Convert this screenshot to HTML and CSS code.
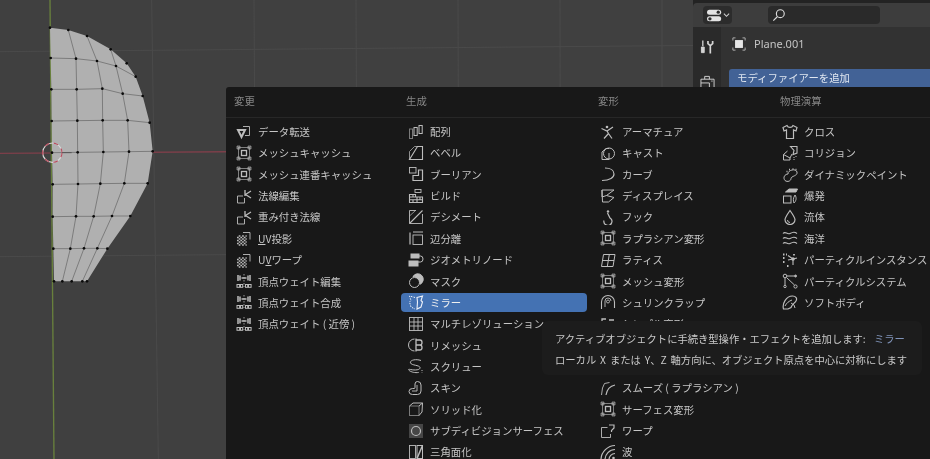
FILE: index.html
```html
<!DOCTYPE html>
<html lang="ja">
<head>
<meta charset="utf-8">
<title>Blender modifier menu</title>
<link rel="stylesheet" href="styles.css">
</head>
<body>
<svg class="sprite" aria-hidden="true">
  <symbol id="i-transfer" viewBox="0 0 16 16"><path d="M2 6h7L5.500 13z" stroke-width="2"/><path d="M7 2.500h6.500v9H9" stroke-width=".9"/></symbol>
  <symbol id="i-mesh" viewBox="0 0 16 16"><rect x="2.500" y="2.500" width="11" height="11" opacity=".7" stroke-width=".9"/><rect x="5.500" y="5.500" width="5" height="5" stroke-width="1.300"/><path d="M1 1h3v3H1zM12 1h3v3h-3zM1 12h3v3H1zM12 12h3v3h-3z" fill="currentColor" fill-opacity=".35" stroke-width=".6"/></symbol>
  <symbol id="i-normal" viewBox="0 0 16 16"><path d="M7 8H1.500v7h7V10" stroke-width=".9"/><path d="M9 2v6M9.500 6.500L15 3M9.500 6.500L15 10" stroke-width="1.300"/></symbol>
  <symbol id="i-uv" viewBox="0 0 16 16"><path d="M7 2.500h7v7" stroke-width=".9"/><path d="M1 7.500h9M1 10.500h9M1 13.500h9" stroke-width="1.700" stroke-dasharray="1.700 1.700"/><path d="M2.700 6h8M2.700 9h8M2.700 12h8M2.700 15h8" stroke-width="1.700" stroke-dasharray="1.700 1.700"/></symbol>
  <symbol id="i-weight" viewBox="0 0 16 16"><path d="M2 2v6M14 2v6M4 2.500v5M12 2.500v5" stroke-width="1.500"/><path d="M5.500 5h5" stroke-width="1.500"/><path d="M8 1v13" stroke-width=".8" stroke-dasharray="1.500 1.500"/><rect x="1" y="11.500" width="2.600" height="2.800"/><rect x="4.500" y="11.500" width="2.200" height="2.800"/><rect x="9.500" y="11.500" width="2.200" height="2.800"/><rect x="12.500" y="11.500" width="2.600" height="2.800"/></symbol>
  <symbol id="i-array" viewBox="0 0 16 16"><rect x="1.500" y="5" width="3" height="9.500" opacity=".6"/><rect x="6" y="3.500" width="3.200" height="8"/><rect x="11" y="1.500" width="3.200" height="8"/></symbol>
  <symbol id="i-bevel" viewBox="0 0 16 16"><path d="M9.500 1.500h5v13h-13z" stroke-width="1.100"/><path d="M1.500 14.500V6.500l5-5h3" stroke-width=".9" opacity=".8"/></symbol>
  <symbol id="i-boolean" viewBox="0 0 16 16"><rect x="1.500" y="1.500" width="6.500" height="5.500" stroke-width=".9"/><path d="M10.500 4h4v10.500H5V9.500h5.500z" stroke-width="1.200"/></symbol>
  <symbol id="i-build" viewBox="0 0 16 16"><rect x="7" y="1.500" width="6" height="3" stroke-width=".9"/><path d="M1.500 6.500h6v2.500h7v5.500h-13zM1.500 9h13M1.500 11.700h13M5 6.500v2.500M9 9v5.500M5 11.700v2.800M12 9v2.700" stroke-width="1.100"/></symbol>
  <symbol id="i-decimate" viewBox="0 0 16 16"><path d="M8 1.500H1.500v13h13V5" stroke-width=".9"/><path d="M1.500 14.500L14.500 1.500" stroke-width="1.100"/><path d="M1.500 7l6-5.500" stroke-width=".7"/></symbol>
  <symbol id="i-edgesplit" viewBox="0 0 16 16"><path d="M2 2.500v12" stroke-width="1.200"/><path d="M5 2h10" stroke-width="1"/><rect x="5" y="5" width="9.500" height="9.500" stroke-width=".9"/></symbol>
  <symbol id="i-geo" viewBox="0 0 16 16"><rect x="3" y="2" width="8" height="4" fill="currentColor"/><rect x="1" y="9" width="9" height="5" fill="currentColor"/><path d="M11 4h1.500q2.500 0 2.500 3t-2.500 3H10"/></symbol>
  <symbol id="i-mask" viewBox="0 0 16 16"><circle cx="6.500" cy="9.500" r="5"/><path d="M5 3.500a5.500 5.500 0 1 1 7 7.800c1-3.500-3-8-7-7.800z" fill="currentColor"/></symbol>
  <symbol id="i-mirror" viewBox="0 0 16 16"><path d="M7 3.500L1.500 2l1.500 4.500L1.500 8 3 13l4 2" stroke-dasharray="1.500 1.200"/><path d="M9 3.500L14.500 2 13 6.500 14.500 8 13 13l-4 2 .5-7z" stroke-width="1.100"/></symbol>
  <symbol id="i-multires" viewBox="0 0 16 16"><rect x="1.500" y="1.500" width="13" height="13" stroke-width=".9"/><path d="M1.500 10h13M1.500 6h13M10 1.500v13M6 1.500v13" stroke-width=".9"/></symbol>
  <symbol id="i-remesh" viewBox="0 0 16 16"><path d="M6.500 2a6 6 0 0 0 0 12"/><path d="M8 1.500v13M8 3h4q2 0 2 2.500T12 8q2 0 2 2.500T12 13H8M8 8h6" stroke-width="1.300"/></symbol>
  <symbol id="i-screw" viewBox="0 0 16 16"><path d="M13 2.500C7 .5 1.500 2.500 2.500 5s9 2 9.500 4.500-5 3-9.500 2S2 14 6.500 14.500 11 14 11 14"/><path d="M14 12v2.500" stroke-dasharray="1 1"/></symbol>
  <symbol id="i-skin" viewBox="0 0 16 16"><path d="M9.500 1.500q3.500 0 3.500 3.500v6q0 3.500-3.500 3.500h-5q-3.500 0-3.500-3t3.500-3h1.500q1 0 1-1V4q0-2.500 2.500-2.500z"/><path d="M4 11h5V5" stroke-width=".9"/></symbol>
  <symbol id="i-solid" viewBox="0 0 16 16"><rect x="1.500" y="5" width="9.500" height="9.500" opacity=".6"/><path d="M1.500 5L5 2h9.500l-.5 9-3 3.500M11 5l3.500-3"/></symbol>
  <symbol id="i-subsurf" viewBox="0 0 16 16"><rect x="1" y="1" width="14" height="14" fill="currentColor" fill-opacity=".28" stroke="none"/><circle cx="8" cy="8" r="4.500" stroke-width="1.200"/></symbol>
  <symbol id="i-tri" viewBox="0 0 16 16"><rect x="1.500" y="1.500" width="6" height="13" stroke-width=".9"/><rect x="9" y="1.500" width="5.500" height="13"/><path d="M9 14.500l5.500-13" stroke-width="1.500"/></symbol>
  <symbol id="i-armature" viewBox="0 0 16 16"><circle cx="7" cy="3" r="1.300" fill="currentColor" stroke="none"/><path d="M1.500 4.500L7 7l6-4M7 7l1.500 2.500M8.500 9.500L4 14.500M8.500 9.500l3.500 5" stroke-width="1.200"/></symbol>
  <symbol id="i-cast" viewBox="0 0 16 16"><circle cx="9" cy="8.500" r="5.500"/><path d="M2 14.500V7L6 3.500h3M2 14.500h7V8" stroke-width="1"/></symbol>
  <symbol id="i-curve" viewBox="0 0 16 16"><path d="M5 2c5.500 0 9 2.500 9 6s-4 6.500-12 6.500" stroke-width="1.200"/></symbol>
  <symbol id="i-displace" viewBox="0 0 16 16"><path d="M2 2h12L6.500 7.500 14 9.500 8.500 14H2.500z M2 2v7l4.500-1.500"/></symbol>
  <symbol id="i-hook" viewBox="0 0 16 16"><circle cx="8" cy="2.500" r="1.200" fill="currentColor" stroke="none"/><path d="M7.500 4l2.500 5a4 4 0 1 1-6 2.500" stroke-width="1.200"/></symbol>
  <symbol id="i-lattice" viewBox="0 0 16 16"><path d="M3.500 2.500h11.500l-2 12H1.500zM9.300 2.500l-2 12M2.500 8.500h11.500"/></symbol>
  <symbol id="i-shrink" viewBox="0 0 16 16"><path d="M1.500 15V8a6.500 6.500 0 0 1 13 0v6" stroke-width="1.100"/><path d="M5 13V7a3 3 0 0 1 6 0" stroke-width=".9"/><circle cx="8" cy="7.500" r="1.500" stroke-width=".9"/></symbol>
  <symbol id="i-simple" viewBox="0 0 16 16"><path d="M2 15V3h4M9 4h5" stroke-width="1.300"/></symbol>
  <symbol id="i-smooth" viewBox="0 0 16 16"><path d="M1.500 15l1-7 2-4.500 5-1" stroke-width=".9"/><path d="M6 15C7 9 10 6 15 5" stroke-width="1.200"/></symbol>
  <symbol id="i-warp" viewBox="0 0 16 16"><path d="M7.500 4.500h-6v10h9V11" stroke-width=".9"/><path d="M9 2h5v3l-2.500 2.500V9" stroke-width="1.200"/></symbol>
  <symbol id="i-wave" viewBox="0 0 16 16"><path d="M1 15.500C1 8 8 1.500 15 1.500M5 15.500c0-5 4.500-10 10-10M9 15.500c0-3 2.500-6 6-6" stroke-width="1.200"/><circle cx="13.500" cy="14" r="1.300" fill="currentColor" stroke="none"/></symbol>
  <symbol id="i-cloth" viewBox="0 0 16 16"><path d="M5 1.500L1 3.500 2 7l2.500-1v8.500h7V6L14 7l1-3.500-4-2c-1 2.500-5 2.500-6 0z" stroke-width="1.200"/></symbol>
  <symbol id="i-collision" viewBox="0 0 16 16"><path d="M8.500 1.500H15V8l-4 1.500 1-4z" stroke-width="1.100"/><path d="M5.500 6L1.500 9.500v5.500H8V13l-6.500-3.500M8 13l2-4"/><path d="M12 12v3M14 11v1" stroke-dasharray="1 1"/></symbol>
  <symbol id="i-paint" viewBox="0 0 16 16"><path d="M3 14.500c-2.500-3 0-6.500 3-6.500-.5-4 8-6 9-2s-6 4-6 6.500-3.500 4-6 2z"/><path d="M7 3.500h1M10.500 3h1M13.500 3.500h1M4.500 5.500h1" stroke-width="1.500"/></symbol>
  <symbol id="i-explode" viewBox="0 0 16 16"><path d="M3.500 4L7 1h8.500l-1.500 3z" fill="currentColor"/><rect x="1.500" y="8" width="7.500" height="7"/><path d="M13 7c-2 3-2 6-1 8 2-2 3-5 1-8z"/></symbol>
  <symbol id="i-fluid" viewBox="0 0 16 16"><path d="M8 1.500C4.500 6.500 3 9 3 10.500a5 5 0 0 0 10 0C13 9 11.500 6.500 8 1.500z" stroke-width="1.200"/><path d="M5.500 11a2.500 2.500 0 0 0 2.500 2.500"/></symbol>
  <symbol id="i-ocean" viewBox="0 0 16 16"><path d="M1 3.500c2.500-3 4 1.500 7 0s4.500-2 7 0M1 8.500c2.500-3 4 1.500 7 0s4.500-2 7 0M1 13.500c2.500-3 4 1.500 7 0s4.500-2 7 0" stroke-width="1.100"/></symbol>
  <symbol id="i-pinst" viewBox="0 0 16 16"><path d="M1 2.500h4M1 6h3M1 10h3M5 14h2M12 2v2" stroke-width="1.800" stroke-dasharray="1.500 1.500"/><path d="M6 3.500l5 3.500v6M11 7l4-1M11 7l-5 1" stroke-width="1.100"/><circle cx="11" cy="7" r="1.800" fill="currentColor" stroke="none"/></symbol>
  <symbol id="i-particles" viewBox="0 0 16 16"><circle cx="3" cy="3" r="1.800"/><circle cx="3" cy="13.500" r="1.200"/><circle cx="13.500" cy="13.500" r="1.600"/><circle cx="13.500" cy="3" r="1" fill="currentColor"/><path d="M3 5v7M4.500 4.500L12.500 12M5 3h7"/></symbol>
  <symbol id="i-soft" viewBox="0 0 16 16"><path d="M1.500 15C0 10 4 2 10.500 2c3.500 0 5 2.500 3.500 5s-4 3-5 6.500L6 15z" stroke-width="1.200"/><path d="M3 12c1.500-3 4-5 7-6M9 9l3 2 1 3"/></symbol>
</svg>

<main class="stage">
  <svg class="scene" viewBox="0 0 2790 1377" aria-hidden="true">
    <path class="grid" d="M0 155L2790 130M0 770L2790 745M455 0L475 1377M762 0L770 1377M1068 0L1074 1377M1374 0L1378 1377M1680 0L1682 1377M1986 0L1986 1377"/>
    <path class="axis-x" d="M0 460L2790 440"/>
    <path class="axis-y" d="M150 0L162 1377"/>
    <path class="face" d="M150 83L205 90 261 108 332 148 380 190 407 230 428 288 449 368 458 454 443 550 391 648 322 746 261 844H162L160 746 158 650 158 553 156 458 155 363 154 268 152 174z"/>
    <path class="edge" d="M152 174L228 176 291 183 348 198 407 230M154 268L230 268 307 266 368 281 428 288M155 363L232 362 308 361 383 361 449 368M156 458L233 457 310 456 387 455 458 454M158 553L234 552 301 551 373 550 443 550M158 650L228 649 281 649 336 648 391 648M160 746L211 746 252 745 292 745 322 746M205 90L228 176 230 268 232 362 233 457 234 552 228 649 211 746 187 844M261 108L291 183 307 266 308 361 310 456 301 551 281 649 252 745 215 844M332 148L348 198 368 281 383 361 387 455 373 550 336 648 292 745 247 844"/>
    <g class="verts">
      <circle cx="150" cy="83" r="4"/><circle cx="205" cy="90" r="4"/><circle cx="261" cy="108" r="4"/><circle cx="332" cy="148" r="4"/><circle cx="380" cy="190" r="4"/><circle cx="407" cy="230" r="4"/>
      <circle cx="152" cy="174" r="4"/><circle cx="228" cy="176" r="4"/><circle cx="291" cy="183" r="4"/><circle cx="348" cy="198" r="4"/>
      <circle cx="154" cy="268" r="4"/><circle cx="230" cy="268" r="4"/><circle cx="307" cy="266" r="4"/><circle cx="368" cy="281" r="4"/><circle cx="428" cy="288" r="4"/>
      <circle cx="155" cy="363" r="4"/><circle cx="232" cy="362" r="4"/><circle cx="308" cy="361" r="4"/><circle cx="383" cy="361" r="4"/><circle cx="449" cy="368" r="4"/>
      <circle cx="156" cy="458" r="4"/><circle cx="233" cy="457" r="4"/><circle cx="310" cy="456" r="4"/><circle cx="387" cy="455" r="4"/><circle cx="458" cy="454" r="4"/>
      <circle cx="158" cy="553" r="4"/><circle cx="234" cy="552" r="4"/><circle cx="301" cy="551" r="4"/><circle cx="373" cy="550" r="4"/><circle cx="443" cy="550" r="4"/>
      <circle cx="158" cy="650" r="4"/><circle cx="228" cy="649" r="4"/><circle cx="281" cy="649" r="4"/><circle cx="336" cy="648" r="4"/><circle cx="391" cy="648" r="4"/>
      <circle cx="160" cy="746" r="4"/><circle cx="211" cy="746" r="4"/><circle cx="252" cy="745" r="4"/><circle cx="292" cy="745" r="4"/><circle cx="322" cy="746" r="4"/>
      <circle cx="162" cy="844" r="4"/><circle cx="187" cy="844" r="4"/><circle cx="215" cy="844" r="4"/><circle cx="247" cy="844" r="4"/><circle cx="261" cy="844" r="4"/>
    </g>
    <circle class="origin-a" cx="157" cy="458" r="29"/>
    <circle class="origin-b" cx="157" cy="458" r="29"/>
    <path class="origin-tick" d="M185 458h30"/>
  </svg>

  <aside class="props">
    <header class="props-head">
      <div class="editor-btn">
        <svg class="editor-ic" viewBox="0 0 18 16"><rect x="0" y="1" width="17" height="6" rx="3"/><rect x="0" y="9" width="17" height="6" rx="3"/><circle class="knob" cx="13.500" cy="4" r="2"/><circle class="knob" cx="3.500" cy="12" r="2"/></svg>
        <svg class="chev" viewBox="0 0 8 6"><path d="M1 1.500l3 3 3-3"/></svg>
      </div>
      <div class="search"><svg class="search-ic" viewBox="0 0 16 16"><circle cx="9.500" cy="6.500" r="4.500"/><path d="M6 10l-4.500 4.500"/></svg></div>
    </header>
    <div class="props-main">
      <nav class="tabs">
        <svg class="tab-ic" viewBox="0 0 16 16"><path d="M3 1v6" stroke-width="1.400"/><path d="M1.500 8h3v6h-3z" fill="currentColor"/><path d="M8.500 1.500v3l2.500 2 2.500-2v-3M11 6.500V15" stroke-width="1.800"/></svg>
        <svg class="tab-ic" viewBox="0 0 16 16"><path d="M1 5h14v10H1zM5 5V2h5v3M1 9h9v6M12 7h1.500"/></svg>
      </nav>
      <div class="props-body">
        <div class="obj-row">
          <svg class="obj-ic" viewBox="0 0 16 16"><path d="M1 4V1h3M12 1h3v3M15 12v3h-3M4 15H1v-3"/><rect x="3.500" y="3.500" width="9" height="9"/></svg>
          <span class="obj-name">Plane.001</span>
        </div>
        <div class="add-btn">モディファイアーを追加</div>
      </div>
    </div>
  </aside>

  <section class="menu">
    <div class="col col-1">
      <h3 class="head">変更</h3>
      <ul class="list">
        <li class="item"><svg class="ic"><use href="#i-transfer"/></svg>データ転送</li>
        <li class="item"><svg class="ic"><use href="#i-mesh"/></svg>メッシュキャッシュ</li>
        <li class="item"><svg class="ic"><use href="#i-mesh"/></svg>メッシュ連番キャッシュ</li>
        <li class="item"><svg class="ic"><use href="#i-normal"/></svg>法線編集</li>
        <li class="item"><svg class="ic"><use href="#i-normal"/></svg>重み付き法線</li>
        <li class="item"><svg class="ic"><use href="#i-uv"/></svg><span><u>U</u>V投影</span></li>
        <li class="item"><svg class="ic"><use href="#i-uv"/></svg><span>U<u>V</u>ワープ</span></li>
        <li class="item"><svg class="ic"><use href="#i-weight"/></svg>頂点ウェイト編集</li>
        <li class="item"><svg class="ic"><use href="#i-weight"/></svg>頂点ウェイト合成</li>
        <li class="item"><svg class="ic"><use href="#i-weight"/></svg>頂点ウェイト ( 近傍 )</li>
      </ul>
    </div>
    <div class="col col-2">
      <h3 class="head">生成</h3>
      <ul class="list">
        <li class="item"><svg class="ic"><use href="#i-array"/></svg>配列</li>
        <li class="item"><svg class="ic"><use href="#i-bevel"/></svg>ベベル</li>
        <li class="item"><svg class="ic"><use href="#i-boolean"/></svg>ブーリアン</li>
        <li class="item"><svg class="ic"><use href="#i-build"/></svg>ビルド</li>
        <li class="item"><svg class="ic"><use href="#i-decimate"/></svg>デシメート</li>
        <li class="item"><svg class="ic"><use href="#i-edgesplit"/></svg>辺分離</li>
        <li class="item"><svg class="ic"><use href="#i-geo"/></svg>ジオメトリノード</li>
        <li class="item"><svg class="ic"><use href="#i-mask"/></svg>マスク</li>
        <li class="item active"><svg class="ic"><use href="#i-mirror"/></svg>ミラー</li>
        <li class="item"><svg class="ic"><use href="#i-multires"/></svg>マルチレゾリューション</li>
        <li class="item"><svg class="ic"><use href="#i-remesh"/></svg>リメッシュ</li>
        <li class="item"><svg class="ic"><use href="#i-screw"/></svg>スクリュー</li>
        <li class="item"><svg class="ic"><use href="#i-skin"/></svg>スキン</li>
        <li class="item"><svg class="ic"><use href="#i-solid"/></svg>ソリッド化</li>
        <li class="item"><svg class="ic"><use href="#i-subsurf"/></svg>サブディビジョンサーフェス</li>
        <li class="item"><svg class="ic"><use href="#i-tri"/></svg>三角面化</li>
      </ul>
    </div>
    <div class="col col-3">
      <h3 class="head">変形</h3>
      <ul class="list">
        <li class="item"><svg class="ic"><use href="#i-armature"/></svg>アーマチュア</li>
        <li class="item"><svg class="ic"><use href="#i-cast"/></svg>キャスト</li>
        <li class="item"><svg class="ic"><use href="#i-curve"/></svg>カーブ</li>
        <li class="item"><svg class="ic"><use href="#i-displace"/></svg>ディスプレイス</li>
        <li class="item"><svg class="ic"><use href="#i-hook"/></svg>フック</li>
        <li class="item"><svg class="ic"><use href="#i-mesh"/></svg>ラプラシアン変形</li>
        <li class="item"><svg class="ic"><use href="#i-lattice"/></svg>ラティス</li>
        <li class="item"><svg class="ic"><use href="#i-mesh"/></svg>メッシュ変形</li>
        <li class="item"><svg class="ic"><use href="#i-shrink"/></svg>シュリンクラップ</li>
        <li class="item"><svg class="ic"><use href="#i-simple"/></svg>シンプル変形</li>
        <li class="item covered">スムーズ</li>
        <li class="item covered">スムーズ ( 補正 )</li>
        <li class="item"><svg class="ic"><use href="#i-smooth"/></svg>スムーズ ( ラプラシアン )</li>
        <li class="item"><svg class="ic"><use href="#i-mesh"/></svg>サーフェス変形</li>
        <li class="item"><svg class="ic"><use href="#i-warp"/></svg>ワープ</li>
        <li class="item"><svg class="ic"><use href="#i-wave"/></svg>波</li>
      </ul>
    </div>
    <div class="col col-4">
      <h3 class="head">物理演算</h3>
      <ul class="list">
        <li class="item"><svg class="ic"><use href="#i-cloth"/></svg>クロス</li>
        <li class="item"><svg class="ic"><use href="#i-collision"/></svg>コリジョン</li>
        <li class="item"><svg class="ic"><use href="#i-paint"/></svg>ダイナミックペイント</li>
        <li class="item"><svg class="ic"><use href="#i-explode"/></svg>爆発</li>
        <li class="item"><svg class="ic"><use href="#i-fluid"/></svg>流体</li>
        <li class="item"><svg class="ic"><use href="#i-ocean"/></svg>海洋</li>
        <li class="item"><svg class="ic"><use href="#i-pinst"/></svg>パーティクルインスタンス</li>
        <li class="item"><svg class="ic"><use href="#i-particles"/></svg>パーティクルシステム</li>
        <li class="item"><svg class="ic"><use href="#i-soft"/></svg>ソフトボディ</li>
      </ul>
    </div>
  </section>

  <div class="tooltip">
    <p class="tip-line">アクティブオブジェクトに手続き型操作・エフェクトを追加します: <span class="tip-name">ミラー</span></p>
    <p class="tip-line tip-desc">ローカル X または Y、Z 軸方向に、オブジェクト原点を中心に対称にします</p>
  </div>
</main>
</body>
</html>
```
FILE: styles.css
```css
* { box-sizing: border-box; }
html, body { margin: 0; padding: 0; background: #404040; }
body { width: 930px; height: 459px; overflow: hidden; font-family: "Noto Sans CJK JP", "Noto Sans", sans-serif; }
ul, h3, p { margin: 0; padding: 0; }
ul { list-style: none; }

.sprite { position: absolute; width: 0; height: 0; }

.stage { position: relative; width: 930px; height: 459px; overflow: hidden; background: #404040; filter: blur(.45px); }

/* 3D viewport */
.scene { position: absolute; inset: 0; width: 930px; height: 459px; }
.grid { fill: none; stroke: #4a4a4a; stroke-width: 3; }
.axis-x { fill: none; stroke: #7d3f4a; stroke-width: 4; }
.axis-y { fill: none; stroke: #68803c; stroke-width: 4; }
.face { fill: #b0b0b0; }
.edge { fill: none; stroke: #7c7c7c; stroke-width: 3; }
.verts circle { fill: #0a0a0a; }
.origin-a { fill: none; stroke: #d8d8d8; stroke-width: 3.500; }
.origin-b { fill: none; stroke: #b84a5c; stroke-width: 3.500; stroke-dasharray: 14 14; }
.origin-tick { stroke: #555; stroke-width: 3; }

/* properties editor */
.props { position: absolute; left: 693px; top: 0; right: 0; height: 100px; background: #232323; padding-top: 3px; display: flex; flex-direction: column; }
.props-head { height: 24px; background: #3d3d3d; display: flex; align-items: center; padding-left: 10px; border-radius: 4px 0 0 0; }
.editor-btn { width: 29px; height: 18px; background: #2c2c2c; border-radius: 4px; display: flex; align-items: center; gap: 1px; padding-left: 4px; }
.editor-ic { width: 15px; height: 15px; fill: #e4e4e4; }
.knob { fill: #2c2c2c; }
.chev { width: 7px; height: 6px; fill: none; stroke: #d0d0d0; stroke-width: 1.200; }
.search { width: 112px; height: 18px; margin-left: 36px; background: #2a2a2a; border-radius: 4px; padding: 2px 0 0 4px; }
.search-ic { width: 14px; height: 14px; fill: none; stroke: #dcdcdc; stroke-width: 1.300; display: block; }
.props-main { flex: 1; display: flex; }
.tabs { width: 28px; background: #2a2a2a; display: flex; flex-direction: column; align-items: center; padding-top: 12px; gap: 19px; color: #d4d4d4; }
.tab-ic { width: 15px; height: 16px; fill: none; stroke: currentColor; flex: none; }
.props-body { flex: 1; background: #323232; padding: 5px 0 0 8px; }
.obj-row { display: flex; align-items: center; height: 23px; padding-left: 3px; gap: 7px; }
.obj-ic { width: 14px; height: 14px; fill: none; stroke: #bcbcbc; }
.obj-ic rect { fill: #e6e6e6; stroke: none; }
.obj-name { font: 11px "Noto Sans", sans-serif; color: #c4c4c4; margin-left: 1px; }
.add-btn { margin-top: 14px; height: 30px; background: #426296; border-radius: 3px 0 0 0; color: #dfe6f0; font-size: 10.400px; padding: 0 0 0 8px; line-height: 17px; }

/* add-modifier menu */
.menu { position: absolute; left: 226px; top: 87px; right: 0; bottom: 0; background: #181818; border-radius: 3px 0 0 0; display: flex; }
.col { flex: none; }
.col-1 { width: 172px; }
.col-2 { width: 192px; }
.col-3 { width: 182px; }
.col-4 { flex: 1; }
.head { height: 31px; border-bottom: 1px solid #272727; padding: 6px 0 0 8px; font-size: 10.400px; font-weight: 400; line-height: 15px; color: #868686; }
.list { display: flex; flex-direction: column; gap: 2.360px; padding: 4px 3px 0; }
.item { display: flex; align-items: center; gap: 6px; height: 19px; padding-left: 7px; border-radius: 4px; font-size: 10.400px; color: #c6c6c6; white-space: nowrap; flex: none; }
.item u { text-underline-offset: 1px; }
.item.active { background: #4472b3; color: #f0f0f0; }
.item.covered { visibility: hidden; }
.ic { width: 16px; height: 16px; flex: none; fill: none; stroke: #bdbdbd; stroke-width: 1; color: #bdbdbd; }
.active .ic { stroke: #eef2fa; color: #eef2fa; }

/* tooltip */
.tooltip { position: absolute; left: 542px; top: 321px; width: 380px; height: 54px; background: #1c1c1c; border-radius: 6px; padding: 10px 0 0 13px; display: flex; flex-direction: column; gap: 5px; }
.tip-line { font-size: 10.300px; line-height: 16px; color: #c9c9c9; white-space: nowrap; }
.tip-desc { word-spacing: 1.600px; }
.tip-name { color: #7f93b8; margin-left: 6px; }
```
